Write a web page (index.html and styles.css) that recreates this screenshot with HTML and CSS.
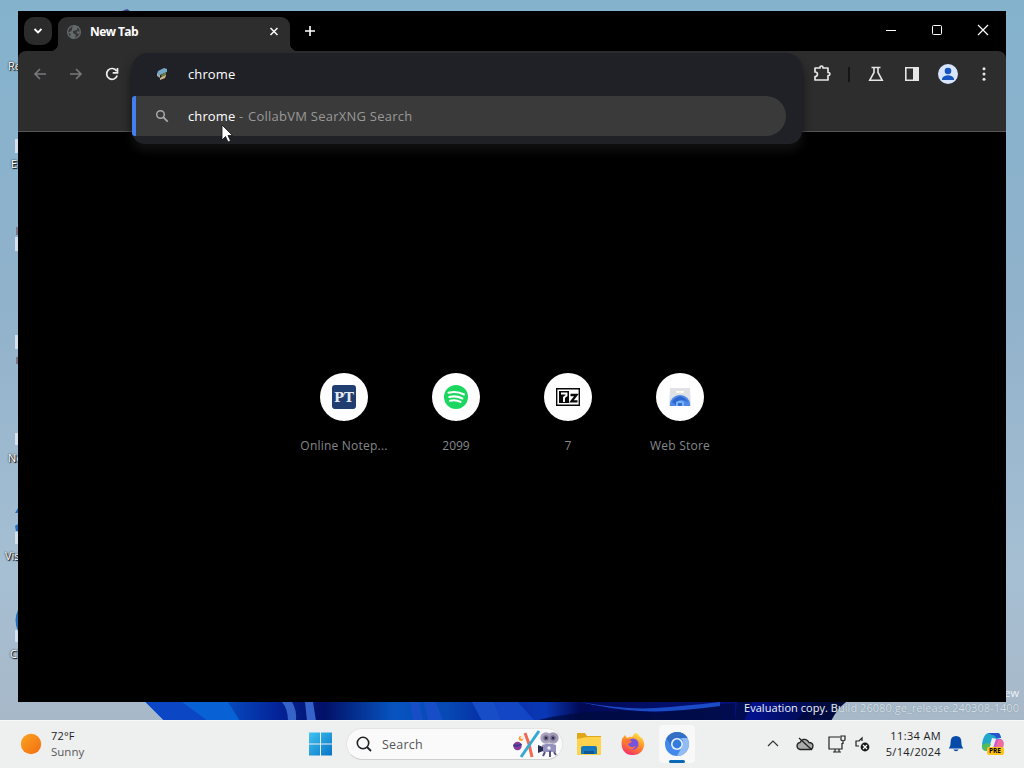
FILE: index.html
```html
<!DOCTYPE html>
<html lang="en">
<head>
<meta charset="utf-8">
<title>New Tab</title>
<link rel="stylesheet" href="styles.css">
</head>
<body>
<div class="desktop">
  <svg class="wallpaper" width="1024" height="768" viewBox="0 0 1024 768">
    <defs>
      <linearGradient id="sky" x1="0" y1="0" x2="0" y2="1"><stop offset="0" stop-color="#84b2cd"/><stop offset=".4" stop-color="#91b2cb"/><stop offset=".75" stop-color="#a6bfd3"/><stop offset="1" stop-color="#a8b6c5"/></linearGradient>
      <linearGradient id="bloom" x1="145" y1="0" x2="835" y2="0" gradientUnits="userSpaceOnUse"><stop offset="0" stop-color="#0b3fb8"/><stop offset=".1" stop-color="#0754c8"/><stop offset=".19" stop-color="#04249a"/><stop offset=".26" stop-color="#021067"/><stop offset=".36" stop-color="#0754c0"/><stop offset=".44" stop-color="#0648b4"/><stop offset=".5" stop-color="#062ba3"/><stop offset=".58" stop-color="#0a38b6"/><stop offset=".63" stop-color="#020a56"/><stop offset=".8" stop-color="#03106f"/><stop offset=".88" stop-color="#04128c"/><stop offset="1" stop-color="#010a38"/></linearGradient>
    </defs>
    <rect width="1024" height="768" fill="url(#sky)"/>
    <path d="M145 702H846Q837 709 831 721H164Z" fill="url(#bloom)"/>
    <path d="M145 702h39l25 19h-45z" fill="#0b47c5"/>
    <path d="M182 702h46l12 19h-32z" fill="#0961d6"/>
    <path d="M282 702h10q5 8 4 19h-8q0-12-6-19zm23 0h8l3 19h-9z" fill="#3563c9"/>
    <path d="M410 702h9l4 19h-10zm14 0h12l7 19h-15zM472 702h22l8 19h-20z" fill="#174dc7"/>
    <path d="M494 702h24l17 19h-34z" fill="#1246c4"/>
    <path d="M534 721q60-15 126-8 60-10 75-10v18zM737 702h15l-8 19h-9zm77 0h15l-14 19h-19z" fill="#000a3b" opacity=".7"/>
    <path d="M580 702q45 8 75 6t65-6v4q-50 7-80 5t-60-9z" fill="#1b4cc8"/>
    <path d="M145 702l19 19" stroke="#78a5dd"/>
    <path d="M122 11l5-2 3 2z" fill="#453f88"/>
    <g fill="#d4e1ec"><path d="M15 139h3v14h-3zm0 98h3v14h-3zm0 98h3v14h-3zm0 98h3v12h-3zm0 99h3v12h-3zm0 98h3v12h-3z"/></g>
    <path d="M18 508l-3 5h3zm0 16l-3 2 1 5h2zM18 610q-5 10 0 21z" fill="#276fb6"/>
    <path d="M16 227h2v8h-2zm0 130h2v7h-2z" fill="#80768b"/>
  </svg>
  <span class="shortcut recycle">Re</span><span class="shortcut edge">Ed</span><span class="shortcut notes">No</span><span class="shortcut visual">Vis</span><span class="shortcut chrome">Ch</span>
  <div class="watermark"><div>Preview</div><div>Evaluation copy. <span>Build 26080.ge_release.240308-1400</span></div></div>

  <main class="window">
    <header class="tabstrip">
      <button class="tabsearch" aria-label="Search tabs"><svg width="28" height="28" viewBox="0 0 28 28"><path d="M10.500 12L14 15.500l3.500-3.500" fill="none" stroke="#fff" stroke-width="1.800"/></svg></button>
      <div class="tab">
        <svg width="16" height="16" viewBox="0 0 16 16"><circle cx="8" cy="8" r="6.400" fill="#363839" stroke="#65696b" stroke-width="1.300"/><path d="M8 1.500L6 4v2L4 8H1.500l3 2v4L8 15l2-4-3-2V7l4-1V4l2-1.500zM14.500 8l-3-1-1 2 2 1z" fill="#65696b"/></svg>
        <span class="tabname">New Tab</span>
        <svg class="tabclose" width="12" height="12" viewBox="0 0 12 12"><path d="M2.500 2l7 7m0-7l-7 7" stroke="#f4f4f4" stroke-width="1.600"/></svg>
      </div>
      <svg class="plus" width="16" height="16" viewBox="0 0 16 16"><path d="M3 8h10M8 3v10" stroke="#fff" stroke-width="1.600"/></svg>
      <div class="controls">
        <svg viewBox="0 0 46 38"><path d="M18 19.500h10" stroke="#fff"/></svg>
        <svg viewBox="0 0 46 38"><rect x="18.500" y="14.500" width="9" height="9" rx="1" fill="none" stroke="#fff"/></svg>
        <svg viewBox="0 0 46 38"><path d="M18 14l10 10m0-10L18 24" stroke="#fff" stroke-width="1.200"/></svg>
      </div>
    </header>
    <nav class="toolbar">
      <div class="navigation">
        <svg viewBox="0 0 16 16"><path d="M14 8H3m5-5L3 8l5 5" stroke="#77797b" stroke-width="1.600" fill="none"/></svg>
        <svg viewBox="0 0 16 16"><path d="M2 8h11M8 3l5 5-5 5" stroke="#77797b" stroke-width="1.600" fill="none"/></svg>
        <svg viewBox="0 0 16 16"><path d="M12.600 5A5.400 5.400 0 1 0 13.200 9.500M13.500 2v4.800H8.700" fill="none" stroke="#eee" stroke-width="1.700"/></svg>
      </div>
      <div class="tools">
        <svg class="puzzle" viewBox="0 0 20 20"><path d="M3 4h5v-.5a1.500 1.500 0 0 1 3 0V4h5v4.500h.300a1.600 1.600 0 0 1 0 3.200H16V16H3v-3.500c3.300 0 3.300-4.500 0-4.500z" fill="none" stroke="#e6e6e6" stroke-width="1.700" stroke-linejoin="round"/></svg>
        <i class="separator"></i>
        <svg viewBox="0 0 20 20"><path d="M5.500 3.500h9M8 3.500v5L3.800 16.200h12.400L12 8.500v-5" fill="none" stroke="#e6e6e6" stroke-width="1.600"/></svg>
        <svg viewBox="0 0 20 20"><path d="M3.800 3.800h12.400v12.400H3.800z" fill="none" stroke="#e6e6e6" stroke-width="1.600"/><path d="M11 4h5v12h-5z" fill="#e6e6e6"/></svg>
        <svg viewBox="0 0 20 20"><circle cx="10" cy="10" r="10" fill="#d8e5ff"/><circle cx="10" cy="7" r="3.300" fill="#1756c0"/><path d="M4 15c1-5 11-5 12 0v1H4z" fill="#1756c0"/></svg>
        <svg viewBox="0 0 20 20" fill="#e6e6e6"><circle cx="10" cy="4.800" r="1.500"/><circle cx="10" cy="10" r="1.500"/><circle cx="10" cy="15.200" r="1.500"/></svg>
      </div>
    </nav>
    <section class="newtab">
      <div class="sites">
        <div class="site"><div class="circle"><svg viewBox="0 0 24 24"><rect width="24" height="24" rx="3" fill="#213e70"/><text class="pt" x="12" y="16.500" textLength="20" lengthAdjust="spacingAndGlyphs">PT</text></svg></div><span class="notepad">Online Notep...</span></div>
        <div class="site"><div class="circle"><svg viewBox="0 0 24 24"><circle cx="12" cy="12" r="12" fill="#1bd760"/><path d="M4.500 7.800c5-1.300 11-.7 15.500 1.700M5.300 12c4.500-1.200 9-.6 13 1.500M6 15.700c3.500-.9 7.500-.4 10.500 1.200" fill="none" stroke="#fff" stroke-width="2.100" stroke-linecap="round"/></svg></div><span>2099</span></div>
        <div class="site"><div class="circle"><svg viewBox="0 0 24 24"><path d="M.7 3.700h22.600v16.600H.7z" fill="#fff" stroke="#080808" stroke-width="1.400"/><path d="M3 6h10v12H3z" fill="#080808"/><path d="M5 8.500h5.500v2L8 12.500V17" fill="none" stroke="#fff" stroke-width="1.900"/><path d="M14.500 10h6l-5 6.300h6" fill="none" stroke="#080808" stroke-width="2.300"/></svg></div><span>7</span></div>
        <div class="site"><div class="circle"><svg viewBox="0 0 24 24"><path d="M2 3h20l1 18H1z" fill="#dfe1e5"/><path d="M8 6h8v2H8z" fill="#fffbed"/><path d="M2 21v-2a10 9 0 0 1 20 0v2z" fill="#4d87e8"/><path d="M4 17q8-11 16 0-8-5-12 3z" fill="#2b67cf"/><path d="M8 21v-4q4-3 8 0v4z" fill="#79b2ff"/><path d="M10 18h4v3h-4z" fill="#316fd3"/></svg></div><span class="webstore">Web Store</span></div>
      </div>
    </section>
    <div class="omnibox">
      <div class="address"><svg viewBox="0 0 16 16"><path d="M4 5l6-3 3 1v3L6 9 3 8z" fill="#73a7c8"/><path d="M3 7l3 2v3l-3-2z" fill="#9eabb0"/><path d="M7 9l5-3v4L8 13z" fill="#6c783c"/><path d="M6 12l6-3-1 3-5 2z" fill="#d1b591"/></svg><span class="query">chrome</span></div>
      <div class="suggestion"><svg viewBox="0 0 16 16"><circle cx="6.500" cy="6.500" r="3.800" fill="none" stroke="#aaa" stroke-width="1.500"/><path d="M9.200 9.200l4.500 4.500" stroke="#aaa" stroke-width="1.800"/></svg><span class="query">chrome</span><span class="provider">- <span>CollabVM SearXNG Search</span></span></div>
    </div>
  </main>
  <svg class="cursor" width="14" height="21" viewBox="0 0 14 21"><path d="M1 1v15l3.500-3.500L7 18l2.500-1.200L7 11.500h4.500z" fill="#fff" stroke="#111" stroke-width=".8"/></svg>

  <footer class="taskbar">
    <div class="weather"><svg width="22" height="22" viewBox="0 0 22 22"><defs><linearGradient id="sun" x1="0" y1="0" x2="1" y2="1"><stop stop-color="#f9a51f"/><stop offset="1" stop-color="#f36c13"/></linearGradient></defs><circle cx="11" cy="11" r="10.200" fill="url(#sun)"/></svg><div><div class="degrees">72°F</div><div class="sunny">Sunny</div></div></div>
    <svg class="start" width="24" height="24" viewBox="0 0 24 24"><defs><linearGradient id="win" x1="0" y1="0" x2="1" y2="1"><stop stop-color="#41c4f2"/><stop offset="1" stop-color="#0873c5"/></linearGradient></defs><path d="M1 .5h11v11H1zm12 0h11v11H13zm-12 12h11v11H1zm12 0h11v11H13z" fill="url(#win)"/></svg>
    <div class="search"><svg width="16" height="16" viewBox="0 0 16 16"><circle cx="7" cy="7" r="5.700" fill="none" stroke="#202124" stroke-width="1.600"/><path d="M11 11l4 4" stroke="#202124" stroke-width="1.800"/></svg><span>Search</span>
      <svg class="doodle" width="46" height="28" viewBox="0 0 46 28"><circle cx="4.500" cy="16" r="4.200" fill="#8a3b99"/><path d="M.5 15q4 2 8-1" stroke="#393b91" stroke-width="2" fill="none"/><circle cx="8" cy="8.500" r="2.400" fill="#ff9d24"/><circle cx="9" cy="7.500" r="1.600" fill="#f8edf0"/><path d="M12 3l4 11 3 13" stroke="#f16b54" stroke-width="3" fill="none"/><path d="M26 1L8 27" stroke="#38a8d2" stroke-width="3"/><circle cx="33" cy="8" r="5.700" fill="#aaa1bd"/><circle cx="40" cy="8" r="5.700" fill="#a199b5"/><path d="M29 15q8-3 14 0v7H30z" fill="#9390bd"/><path d="M25 15l5 2v4l-5 2z" fill="#292b4f"/><circle cx="33" cy="8" r="2.700" fill="#716b87"/><circle cx="40" cy="8" r="2.700" fill="#716b87"/><circle cx="33" cy="8" r="1.200" fill="#292b4f"/><circle cx="40" cy="8" r="1.200" fill="#292b4f"/><path d="M32 22l-2 4m7-5v6m4-5l2 3" stroke="#5a5082" stroke-width="2" fill="none"/><circle cx="36" cy="18" r="1.700" fill="#eee"/></svg>
    </div>
    <div class="apps">
      <svg viewBox="0 0 28 28"><path d="M2 3h8l2 3h14v17q0 2-2 2H4q-2 0-2-2z" fill="#e1a719"/><path d="M2 9l10-2h14v16q0 2-2 2H4q-2 0-2-2z" fill="#ffd34c"/><path d="M6 18q0-2 2-2h12q2 0 2 2v6H6z" fill="#1779bd"/><path d="M9 21h10v3H9z" fill="#0c5797"/></svg>
      <svg viewBox="0 0 28 28"><defs><linearGradient id="fire" x1=".7" y1="0" x2=".2" y2="1"><stop stop-color="#ffe149"/><stop offset=".45" stop-color="#ff8c27"/><stop offset="1" stop-color="#f5276d"/></linearGradient></defs><path d="M3 9l3-4 2 3q3-2 5-1l3-4q3 0 5 4l2 1q4 6 1 11c-2 5-7 6-11 6C6 25 1 19 3 9z" fill="url(#fire)"/><circle cx="14" cy="14" r="5.500" fill="#7652df"/><path d="M7 9q4 0 6 3l-4 2q2 5 8 2-3 6-9 1-2-3-1-8z" fill="#ff7139"/></svg>
      <div class="activeapp"><svg viewBox="0 0 28 28"><circle cx="14" cy="14" r="12" fill="#4389ed"/><path d="M3.500 8.500A12 12 0 0 1 24.500 8H14a6 6 0 0 0-5 9z" fill="#326fc5"/><path d="M24.500 8A12 12 0 0 1 14 26l5-9q3-5-1-9z" fill="#92bcf6"/><circle cx="14" cy="14" r="6" fill="#e8f2ff"/><circle cx="14" cy="14" r="4.400" fill="#347adf"/></svg></div>
    </div>
    <div class="tray">
      <svg class="up" viewBox="0 0 20 20"><path d="M5 12l5-5 5 5" fill="none" stroke="#333" stroke-width="1.200"/></svg>
      <svg class="cloud" viewBox="0 0 20 20"><path d="M5 15.500h10q3-.5 3-4-.5-3-4-3-2-4-6-3-2 1-3 3-3 .5-3 4 .5 2.500 3 3z" fill="#ababab" stroke="#222" stroke-width="1.300"/><path d="M4 4l13 12" stroke="#222" stroke-width="1.300"/></svg>
      <svg class="network" viewBox="0 0 20 20"><path d="M13 3H2v12h13V9M6 18h8m-6-3v3m4-3v3M14 2h4v4l-2 1-2-1zM16 7v3" fill="none" stroke="#222" stroke-width="1.200"/></svg>
      <svg class="sound" viewBox="0 0 20 20"><path d="M10 7V4L7 7H4v5h3" fill="none" stroke="#222" stroke-width="1.200"/><circle cx="13" cy="13" r="4.400" fill="#191919"/><path d="M11 11l4 4m0-4l-4 4" stroke="#fff" stroke-width="1.200"/></svg>
      <div class="clock"><div class="time">11:34 AM</div><div class="date">5/14/2024</div></div>
      <svg class="bell" viewBox="0 0 20 20"><path d="M3 13q1-1 1-5 0-7 6-7t6 7q0 4 1 5l1 2H2zM7 16h6q-1 2-3 2t-3-2z" fill="#064ba8"/></svg>
      <svg class="copilot" viewBox="0 0 26 26"><path d="M2 16C2 8 5 2 9 2h9q2 0 3 5l-4 1-5-1-2 7-5 5q-3 0-3-3z" fill="#20a7cb"/><path d="M8 2h10q2 0 3 5h-5q-1-3-4-3z" fill="#2556ce"/><path d="M2 14l5-2 4 1-3 7H6q-4 0-4-6z" fill="#53bb5a"/><path d="M16 8h5q4 2 2 8l-3 4h-8z" fill="#c65ed1"/><path d="M18 9h3q4 2 2 8h-7z" fill="#f16f9b"/><rect x="7" y="16" width="17" height="8" rx="2" fill="#ffc21a"/><text x="9" y="22.400">PRE</text></svg>
    </div>
  </footer>
</div>
</body>
</html>
```
FILE: styles.css
```css
* { box-sizing: border-box; }
body { margin: 0; overflow: hidden; font-family: "Open Sans", "Noto Sans", sans-serif; }
svg { display: block; flex: none; }
.desktop { position: relative; width: 1024px; height: 768px; overflow: hidden; display: flex; align-items: flex-end; }
.wallpaper { position: absolute; inset: 0; }
.shortcut { position: absolute; font-size: 11px; line-height: 14px; color: #fff; text-shadow: 1px 1px 1px #000, 0 0 2px #000; }
.recycle { left: 8px; top: 59px; }
.edge { left: 11px; top: 157px; }
.notes { left: 8px; top: 451px; }
.visual { left: 5px; top: 549px; }
.chrome { left: 10px; top: 647px; }
.watermark { position: absolute; right: 5px; top: 685px; text-align: right; font-size: 11px; line-height: 15px; color: #edf2f8; white-space: nowrap; letter-spacing: .04px; }
.watermark span { color: #d9e1e9; text-shadow: 0 0 1px #6e8293; }
.window { position: absolute; left: 18px; top: 11px; width: 988px; height: 691px; background: #000; display: flex; flex-direction: column; }
.tabstrip { height: 40px; flex: none; display: flex; align-items: flex-start; padding: 6px 0 0 6px; color: #fff; }
.tabsearch { width: 28px; height: 28px; padding: 0; border: 0; border-radius: 10px; background: #2b2b2b; }
.tab { position: relative; width: 232px; height: 34px; margin-left: 6px; padding: 0 10px 5px 8px; display: flex; align-items: center; background: #2d2d2d; border-radius: 9px 9px 0 0; }
.tab::before, .tab::after { content: ""; position: absolute; bottom: 0; width: 8px; height: 8px; }
.tab::before { left: -8px; background: radial-gradient(circle at 0 0, transparent 8px, #2d2d2d 8.5px); }
.tab::after { right: -8px; background: radial-gradient(circle at 100% 0, transparent 8px, #2d2d2d 8.5px); }
.tabname { margin-left: 8px; font-size: 12px; font-weight: 700; letter-spacing: -.58px; }
.tabclose { margin-left: auto; }
.plus { margin: 6px 0 0 12px; }
.controls { display: flex; margin: -6px 0 0 auto; }
.controls svg { width: 46px; height: 38px; }
.toolbar { height: 81px; flex: none; display: flex; align-items: flex-start; background: #2d2d2d; border-bottom: 1px solid #555; border-radius: 8px 8px 0 0; padding: 12px 12px 0 14px; }
.navigation { display: flex; gap: 20px; margin-top: 3px; }
.navigation svg { width: 16px; height: 16px; }
.tools { display: flex; align-items: center; gap: 16px; margin-left: auto; margin-top: 1px; }
.tools svg { width: 20px; height: 20px; }
.separator { width: 2px; height: 15px; background: #151515; }
.newtab { flex: 1; display: flex; justify-content: center; padding-top: 241px; }
.sites { display: flex; height: 86px; }
.site { width: 112px; display: flex; flex-direction: column; align-items: center; color: #85888b; font-size: 12px; }
.circle { width: 48px; height: 48px; border-radius: 50%; background: #fff; display: grid; place-items: center; margin-bottom: 16px; }
.circle svg { width: 24px; height: 24px; }
.notepad { letter-spacing: .22px; }
.webstore { letter-spacing: .22px; }
.pt { font: bold 12px "DejaVu Serif", serif; fill: #e5ecf5; text-anchor: middle; }
.omnibox { position: absolute; left: 114px; top: 42px; width: 670px; height: 91px; background: #202027; border-radius: 16px 16px 13px 13px; box-shadow: 0 7px 10px #101010; }
.address, .suggestion { display: flex; align-items: center; font-size: 13px; color: #fff; padding-left: 22px; }
.address { height: 43px; padding-bottom: 2px; }
.suggestion { width: 654px; height: 40px; background: #3a3a3a; border-left: 4px solid #437ff1; border-radius: 3px 20px 20px 3px; padding-left: 18px; }
.address svg, .suggestion svg { width: 16px; height: 16px; }
.query { margin-left: 18px; width: 48px; letter-spacing: .12px; }
.provider { margin-left: 3px; color: #999; white-space: nowrap; letter-spacing: .24px; }
.provider span { margin-left: 1px; }
.cursor { position: absolute; left: 221px; top: 124px; }
.taskbar { position: relative; width: 1024px; height: 48px; display: flex; align-items: center; background: #eeefef; border-top: 1px solid #f8f9fb; padding-bottom: 1px; color: #202124; }
.weather { width: 308px; padding-left: 20px; display: flex; align-items: center; gap: 9px; font-size: 11px; line-height: 16px; }
.degrees { letter-spacing: .15px; }
.sunny { color: #595959; font-size: 11.5px; }
.search { height: 32px; width: 217px; margin-left: 14px; border-radius: 16px; border: 1px solid #e4e4e4; border-bottom-color: #cfcfcf; background: #fafafa; display: flex; align-items: center; padding-left: 9px; }
.search span { margin-left: 10px; font-size: 12.5px; color: #555; letter-spacing: .2px; }
.doodle { margin-left: auto; margin-right: 3px; }
.apps { display: flex; align-items: center; margin-left: 12px; gap: 16px; }
.apps svg { width: 28px; height: 28px; }
.activeapp { position: relative; width: 36px; height: 38px; margin-left: -4px; background: #f8f8f8; border-radius: 4px; display: grid; place-items: center; }
.activeapp::after { content: ""; position: absolute; bottom: 0; left: 10px; width: 16px; height: 3px; border-radius: 2px; background: #0769b8; }
.tray { margin-left: auto; padding-right: 18px; display: flex; align-items: center; }
.tray svg { width: 20px; height: 20px; }
.tray .cloud { margin-left: 12px; }
.tray .network { margin-left: 12px; }
.tray .sound { margin-left: 5px; }
.clock { width: 69px; font-size: 11px; line-height: 16px; text-align: right; white-space: nowrap; letter-spacing: .36px; }
.tray .bell { width: 18px; height: 18px; margin-left: 6px; }
.tray .copilot { width: 26px; height: 26px; margin-left: 15px; }
.copilot text { font: bold 6.5px "Open Sans", sans-serif; }
```
